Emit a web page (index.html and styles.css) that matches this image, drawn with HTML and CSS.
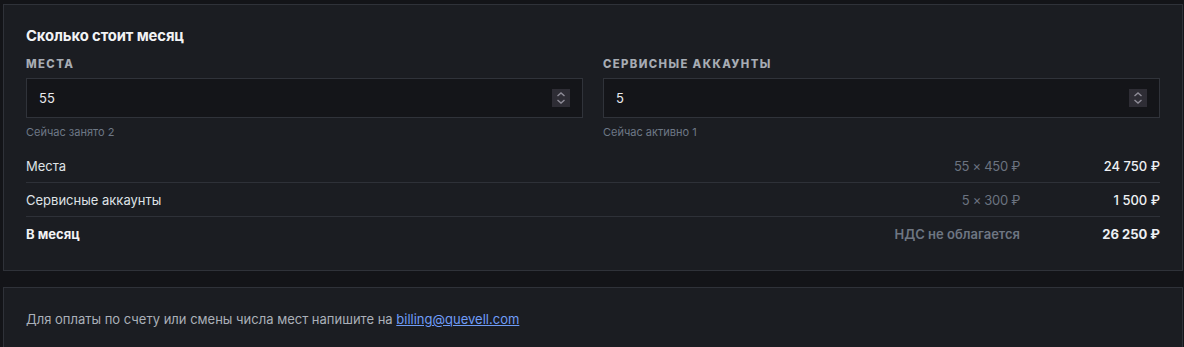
FILE: index.html
```html
<!DOCTYPE html>
<html lang="ru">
<head>
<meta charset="utf-8">
<link rel="stylesheet" href="styles.css">
</head>
<body>
<div class="page">
  <section class="card calc">
    <h2 class="title">Сколько стоит месяц</h2>
    <div class="fields">
      <div class="field">
        <label class="label" for="seats">МЕСТА</label>
        <div class="input-box">
          <input class="input" id="seats" type="number" value="55">
          <span class="spin"><svg width="18" height="18" viewBox="0 0 18 18"><path d="M5.5 7 L9 4 L12.5 7 M5.5 11 L9 14 L12.5 11" fill="none" stroke="#8e8c97" stroke-width="1.4"/></svg></span>
        </div>
        <div class="hint">Сейчас занято 2</div>
      </div>
      <div class="field">
        <label class="label" for="svc">СЕРВИСНЫЕ АККАУНТЫ</label>
        <div class="input-box">
          <input class="input" id="svc" type="number" value="5">
          <span class="spin"><svg width="18" height="18" viewBox="0 0 18 18"><path d="M5.5 7 L9 4 L12.5 7 M5.5 11 L9 14 L12.5 11" fill="none" stroke="#8e8c97" stroke-width="1.4"/></svg></span>
        </div>
        <div class="hint">Сейчас активно 1</div>
      </div>
    </div>
    <div class="rows">
      <div class="row">
        <span class="name">Места</span>
        <span class="calc-col">55 × 450 ₽</span>
        <span class="sum">24 750 ₽</span>
      </div>
      <div class="row">
        <span class="name">Сервисные аккаунты</span>
        <span class="calc-col">5 × 300 ₽</span>
        <span class="sum">1 500 ₽</span>
      </div>
      <div class="row total">
        <span class="name">В месяц</span>
        <span class="calc-col">НДС не облагается</span>
        <span class="sum">26 250 ₽</span>
      </div>
    </div>
  </section>
  <section class="card note">
    Для оплаты по счету или смены числа мест напишите на <a class="link" href="#">billing@quevell.com</a>
  </section>
</div>
</body>
</html>
```

FILE: styles.css
```css
* { box-sizing: border-box; }
html, body { margin: 0; padding: 0; }
body {
  background: #131418;
  font-family: Inter, "Noto Sans", sans-serif;
  color: #e6e8eb;
}
.page {
  padding: 4px 2px 0 3px;
  display: flex;
  flex-direction: column;
  gap: 16px;
}
.card {
  background: #1b1d22;
  border: 1px solid #2f3239;
  width: 1180px;
}
.calc {
  padding: 22px 22px 20px 22px;
}
.title {
  margin: 0;
  font-size: 14.8px;
  font-weight: 700;
  color: #f2f3f5;
  line-height: 18px;
  letter-spacing: -0.1px;
}
.fields {
  margin-top: 12px;
  display: grid;
  grid-template-columns: 1fr 1fr;
  gap: 20px;
}
.field { display: flex; flex-direction: column; }
.label {
  font-size: 11.3px;
  font-weight: 800;
  letter-spacing: 1.4px;
  color: #a7acb4;
  line-height: 14px;
  margin-bottom: 7px;
}
.input-box {
  height: 40px;
  background: #141519;
  border: 1px solid #30333a;
  display: flex;
  align-items: center;
  padding: 0 12px;
}
.input {
  flex: 1;
  min-width: 0;
  background: transparent;
  border: 0;
  outline: none;
  color: #e8eaee;
  font-family: inherit;
  font-size: 13px;
  padding: 0;
  -moz-appearance: textfield;
}
.input::-webkit-inner-spin-button,
.input::-webkit-outer-spin-button { -webkit-appearance: none; margin: 0; }
.spin {
  width: 18px;
  height: 18px;
  background: #2e2d35;
  display: flex;
}
.hint {
  margin-top: 7px;
  font-size: 11px;
  color: #6e7886;
  line-height: 14px;
}
.rows { margin-top: 10px; }
.row {
  display: grid;
  grid-template-columns: 1fr 200px 140px;
  align-items: center;
  height: 34px;
  font-size: 13px;
  border-bottom: 1px solid #2e3138;
}
.row.total { border-bottom: 0; height: 33px; }
.name { color: #dfe2e6; }
.calc-col { text-align: right; color: #6b7380; letter-spacing: -0.3px; }
.sum { text-align: right; color: #eef0f3; font-weight: 500; }
.total .name { font-weight: 700; color: #f2f3f5; }
.total .calc-col { font-weight: 600; color: #6e7682; letter-spacing: 0; }
.total .sum { font-weight: 700; }
.note {
  padding: 22px 22px 40px 22px;
  font-size: 13px;
  color: #aab0b8;
  line-height: 18px;
}
.link { color: #6f9cf7; text-decoration: underline; }
```
